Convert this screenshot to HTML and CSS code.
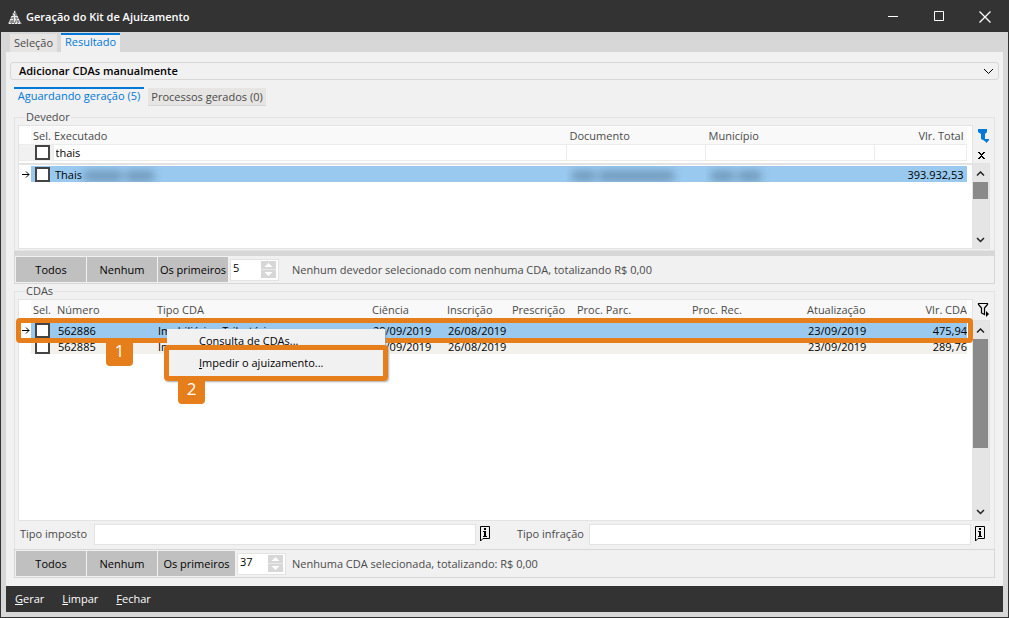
FILE: index.html
```html
<!DOCTYPE html>
<html lang="pt-BR">
<head>
<meta charset="utf-8">
<title>Geração do Kit de Ajuizamento</title>
<link rel="stylesheet" href="styles.css">
</head>
<body>
<div class="window">
  <header class="titlebar">
    <svg class="logo" width="14" height="15" viewBox="0 0 14 15"><path d="M7 0L9 5L12 11L14 14H0L2 10L5 4Z" fill="#8a8a8a"/><path d="M6.500 1v12M4 6.500h5M3 9.500h8M1 13.500h12M9 6l3 7M4 6l-3 7M5 3l4 10" fill="none" stroke="#efefef" stroke-width="1" stroke-dasharray="2 1"/></svg>
    <h1>Geração do Kit de Ajuizamento</h1>
    <div class="win-buttons">
      <button aria-label="Minimizar"><svg width="14" height="14"><path d="M2 6.500h10" stroke="#fff"/></svg></button>
      <button aria-label="Maximizar"><svg width="14" height="14"><path d="M2.500 1.500h9v9h-9z" stroke="#fff" fill="none"/></svg></button>
      <button aria-label="Fechar janela"><svg width="14" height="14"><path d="M1.500 1.500l11 11M12.500 1.500l-11 11" stroke="#fff" stroke-width="1.300"/></svg></button>
    </div>
  </header>

  <nav class="tabs main-tabs">
    <button class="tab">Seleção</button>
    <button class="tab active">Resultado</button>
  </nav>

  <main class="panel">
    <button class="accordion">Adicionar CDAs manualmente
      <svg width="11" height="7"><path d="M1 1l4.500 4.500L10 1" fill="none" stroke="#000"/></svg>
    </button>
    <div class="content">
      <nav class="tabs sub-tabs">
        <button class="tab active">Aguardando geração (5)</button>
        <button class="tab">Processos gerados (0)</button>
      </nav>

      <fieldset class="group debtors">
        <legend>Devedor</legend>
        <div class="grid">
          <div class="table-box">
            <table>
              <colgroup><col class="c-mark"><col class="c-check"><col><col class="c-doc"><col class="c-city"><col class="c-total"></colgroup>
              <thead>
                <tr class="head"><td></td><th class="sel">Sel.</th><th class="flush">Executado</th><th>Documento</th><th>Município</th><th class="num">Vlr. Total</th></tr>
                <tr class="filter"><td></td><td><input type="checkbox" aria-label="Filtrar selecionados"></td><td><input type="text" value="thais" aria-label="Filtrar executado"></td><td><input type="text" aria-label="Filtrar documento"></td><td><input type="text" aria-label="Filtrar município"></td><td><input type="text" aria-label="Filtrar valor"></td></tr>
              </thead>
              <tbody>
                <tr class="current"><td class="mark"><svg width="9" height="9"><path d="M0 4.500h7M4 1.500l3 3l-3 3" fill="none" stroke="#000"/></svg></td><td><input type="checkbox" aria-label="Selecionar Thais"></td><td class="flush">Thais<span class="masked"><i class="w3"></i><i class="w2"></i></span></td><td><span class="masked"><i class="w1"></i><i class="w4"></i></span></td><td><span class="masked"><i class="w1"></i><i class="w1"></i></span></td><td class="num">393.932,53</td></tr>
              </tbody>
            </table>
          </div>
          <div class="side">
            <div class="side-head">
              <button aria-label="Filtro"><svg width="13" height="15"><path d="M1 1h9v3L8 6v7L4 11V6L1 4z" fill="#0078d7"/><path d="M7 11h5v1l-2.500 3L7 12z" fill="#0078d7"/></svg></button>
              <button aria-label="Limpar filtro"><svg width="9" height="9"><path d="M1 1h2v1h1v1h1V2h1V1h2v1H7v1H6v1H5v1h1v1h1v1h1v1H6V7H5V6H4v1H3v1H1V7h1V6h1V5h1V4H3V3H2V2H1z"/></svg></button>
            </div>
            <div class="scroll"><span class="arrow"><svg width="9" height="6"><path d="M1 4.500L4.500 1L8 4.500" fill="none" stroke="#222" stroke-width="1.500"/></svg></span><span class="thumb"></span><span class="arrow end"><svg width="9" height="6"><path d="M1 1L4.500 4.500L8 1" fill="none" stroke="#222" stroke-width="1.500"/></svg></span></div>
          </div>
        </div>
      </fieldset>

      <div class="toolbar top">
        <div class="tools">
          <button>Todos</button><button>Nenhum</button><button>Os primeiros</button>
          <div class="spin"><input type="text" value="5" aria-label="Quantidade de devedores"><svg width="15" height="17"><path d="M0 0h15v17H0z" fill="#d7d7d7"/><path d="M7.500 2L11.500 6h-8zM7.500 15L11.500 11h-8z" fill="#fff"/><path d="M0 8.500h15" stroke="#e8e8e8"/></svg></div>
        </div>
        <span>Nenhum devedor selecionado com nenhuma CDA, totalizando R$ 0,00</span>
      </div>

      <fieldset class="group cdas">
        <legend>CDAs</legend>
        <div class="grid">
          <div class="table-box">
            <table>
              <colgroup><col class="c-mark"><col class="c-check2"><col class="c-number"><col><col class="c-date"><col class="c-short"><col class="c-short"><col class="c-proc"><col class="c-proc"><col class="c-update"><col class="c-value"></colgroup>
              <thead>
                <tr class="head"><td></td><th class="sel">Sel.</th><th>Número</th><th>Tipo CDA</th><th>Ciência</th><th>Inscrição</th><th>Prescrição</th><th>Proc. Parc.</th><th>Proc. Rec.</th><th>Atualização</th><th class="num">Vlr. CDA</th></tr>
              </thead>
              <tbody>
                <tr class="current"><td class="mark"><svg width="9" height="9"><path d="M0 4.500h7M4 1.500l3 3l-3 3" fill="none" stroke="#000"/></svg></td><td><input type="checkbox" aria-label="Selecionar 562886"></td><td>562886</td><td>Imobiliário - Tributário</td><td>28/09/2019</td><td>26/08/2019</td><td></td><td></td><td></td><td>23/09/2019</td><td class="num">475,94</td></tr>
                <tr class="odd"><td class="mark"></td><td><input type="checkbox" aria-label="Selecionar 562885"></td><td>562885</td><td>Im</td><td>28/09/2019</td><td>26/08/2019</td><td></td><td></td><td></td><td>23/09/2019</td><td class="num">289,76</td></tr>
              </tbody>
            </table>
          </div>
          <div class="side">
            <div class="side-head">
              <button aria-label="Filtro"><svg width="13" height="15"><path d="M1.500 1.500h9v1L7.500 6v6.500L4.500 11V6L1.500 2.500z" fill="none" stroke="#000" stroke-width="1.200"/><path d="M9 9l3 3l-3 3z"/></svg></button>
            </div>
            <div class="scroll"><span class="arrow"><svg width="9" height="6"><path d="M1 4.500L4.500 1L8 4.500" fill="none" stroke="#222" stroke-width="1.500"/></svg></span><span class="thumb"></span><span class="arrow end"><svg width="9" height="6"><path d="M1 1L4.500 4.500L8 1" fill="none" stroke="#222" stroke-width="1.500"/></svg></span></div>
          </div>
          <div class="callout row-callout"><span class="step">1</span></div>
          <div class="menu">
            <button>Consulta de CDAs...</button>
            <button><u>I</u>mpedir o ajuizamento...</button>
            <div class="callout menu-callout"><span class="step">2</span></div>
          </div>
        </div>
        <div class="fields">
          <label for="imposto">Tipo imposto</label><input id="imposto" type="text">
          <button aria-label="Informações do imposto"><svg width="12" height="17"><path d="M1.500 1.500h9v12H4L1.500 16z" fill="none" stroke="#000"/><path d="M5 3h2v2H5zM4 6h3v5h1v1H4v-1h1V7H4z"/></svg></button>
          <label class="second" for="infracao">Tipo infração</label><input id="infracao" type="text">
          <button aria-label="Informações da infração"><svg width="12" height="17"><path d="M1.500 1.500h9v12H4L1.500 16z" fill="none" stroke="#000"/><path d="M5 3h2v2H5zM4 6h3v5h1v1H4v-1h1V7H4z"/></svg></button>
        </div>
      </fieldset>

      <div class="toolbar">
        <div class="tools">
          <button>Todos</button><button>Nenhum</button><button class="wide">Os primeiros</button>
          <div class="spin"><input type="text" value="37" aria-label="Quantidade de CDAs"><svg width="15" height="17"><path d="M0 0h15v17H0z" fill="#d7d7d7"/><path d="M7.500 2L11.500 6h-8zM7.500 15L11.500 11h-8z" fill="#fff"/><path d="M0 8.500h15" stroke="#e8e8e8"/></svg></div>
        </div>
        <span>Nenhuma CDA selecionada, totalizando: R$ 0,00</span>
      </div>
    </div>
  </main>

  <footer class="actions">
    <button><u>G</u>erar</button><button><u>L</u>impar</button><button><u>F</u>echar</button>
  </footer>
</div>
</body>
</html>
```
FILE: styles.css
```css
* { box-sizing: border-box; }
body { margin: 0; font: 11px/14px "Open Sans", "Noto Sans", sans-serif; color: #4a4a4a; background: #333; }
button, input { font: inherit; color: inherit; border: 0; padding: 0; margin: 0; background: none; border-radius: 0; }
svg { display: block; flex: none; }

.window { height: 100vh; min-height: 500px; display: flex; flex-direction: column; border: 1px solid #333; border-top: 0; background: #d7d7d7; padding-bottom: 5px; }
.titlebar { height: 32px; flex: none; background: #333; color: #fff; display: flex; align-items: center; padding: 2px 16px 0 7px; gap: 4px; }
.titlebar h1 { font-size: 11px; line-height: 14px; font-weight: 600; margin: 0; flex: 1; }
.win-buttons { display: flex; gap: 32px; }

.tabs { display: flex; align-items: flex-start; flex: none; }
.tab { background: #e6e5e3; height: 18px; line-height: 18px; text-align: center; white-space: nowrap; }
.tab.active { color: #0078d7; border-top: 2px solid #0078d7; background: #f1f1f1; padding-bottom: 3px; line-height: 14px; }
.main-tabs { height: 20px; padding: 1px 9px 0; gap: 4px; }
.main-tabs .tab { width: 47px; margin-top: 1px; }
.main-tabs .tab.active { width: 59px; margin-top: 0; height: 19px; }
.sub-tabs { height: 23px; gap: 4px; }
.sub-tabs .tab { width: 118px; margin-top: 1px; border-bottom: 1px solid #d7d7d7; }
.sub-tabs .tab.active { width: 130px; margin-top: 0; border-bottom: 0; }

.panel { flex: 1; min-height: 0; margin: 0 5px; background: #f1f1f1; padding: 10px 4px 8px; display: flex; flex-direction: column; }
.accordion { height: 18px; flex: none; border: 1px solid #d7d7d7; border-radius: 3px; font-weight: 600; color: #000; display: flex; align-items: center; justify-content: space-between; padding: 0 4px 0 8px; }
.content { flex: 1; min-height: 0; display: flex; flex-direction: column; padding: 7px 4px 0; }

.group { margin: 0; min-width: 0; border: 1px solid #e3e3e3; padding: 1px 4px 0 3px; display: flex; flex-direction: column; }
.group legend { padding: 0 1px; margin-left: 7px; height: 14px; }
.debtors { height: 141px; flex: none; }
.cdas { flex: 1; min-height: 0; border-bottom: 0; }
.grid { display: flex; position: relative; flex: 1; min-height: 0; }
.debtors .grid { flex: none; height: 124px; }
.table-box { flex: 1; min-width: 0; background: #fff; border: 1px solid #e3e3e3; border-right: 0; padding-right: 5px; }
.debtors .table-box { padding-top: 1px; background: #fff linear-gradient(#e3e3e3, #e3e3e3) 0 37px / 100% 2px no-repeat; }
table { table-layout: fixed; border-collapse: collapse; width: 100%; }
td, th { padding: 0 3px; height: 16px; line-height: 15px; font-weight: 400; text-align: left; white-space: nowrap; overflow: hidden; vertical-align: middle; }
th { background: #f9f9f9; }
th.sel { padding: 0 0 0 2px; overflow: visible; }
th.flush { padding-left: 1px; }
td.flush { padding-left: 2px; }
.num { text-align: right; }
.head th { height: 17px; }
.filter td { padding: 0; height: 16px; border: solid #ececec; border-width: 1px 0; }
.filter td + td + td { border-left: 1px solid #ececec; border-right: 1px solid #ececec; }
.filter td:first-child, .filter td:nth-child(2) { background: #f1f1f1; }
.filter input[type="text"] { width: 100%; height: 14px; padding-left: 2px; color: #000; display: block; background: #fff; }
tbody::before { content: ""; display: table-row; height: 6px; }
tbody td { color: #000; }
.current td { background: #99c9ef; }
.odd td { background: #f2f1ec; }
tbody td.mark { background: #fff; padding: 0 0 0 3px; }
input[type="checkbox"] { appearance: none; width: 15px; height: 15px; border: 2px solid #444; background: #fff; display: block; margin: 0 0 0 1px; }
.filter input[type="checkbox"] { margin-left: 4px; }
.c-mark { width: 12px; }
.c-check { width: 22px; }
.c-doc { width: 139px; }
.c-city { width: 169px; }
.c-total { width: 92px; }
.c-check2 { width: 24px; }
.c-number { width: 100px; }
.c-date { width: 75px; }
.c-short { width: 65px; }
.c-proc { width: 115px; }
.c-update { width: 99px; }
.c-value { width: 63px; }
.cdas .head th { height: 19px; padding-left: 2px; }
.cdas tbody::before { height: 3px; }
.cdas th.num, .cdas td.num { padding-right: 0; }

.masked { display: inline-flex; gap: 4px; vertical-align: middle; margin-left: 2px; filter: blur(4px); }
.masked i { height: 10px; background: #6f97b9; }
.w1 { width: 23px; }
.w2 { width: 28px; }
.w3 { width: 38px; }
.w4 { width: 75px; }

.side { width: 18px; flex: none; display: flex; flex-direction: column; }
.side-head { height: 38px; flex: none; border-left: 1px solid #e3e3e3; background: #f1f1f1; padding: 3px 0 0 4px; display: flex; flex-direction: column; align-items: flex-start; gap: 8px; }
.scroll { flex: 1; background: #e5e5e5; border: 1px solid #fff; border-left: 0; outline: 1px solid #e3e3e3; outline-offset: -1px; padding-top: 1px; display: flex; flex-direction: column; }
.arrow { height: 17px; display: grid; place-items: center; }
.arrow.end { margin-top: auto; }
.thumb { background: #8a8a8a; height: 17px; margin-right: 1px; }
.cdas .side-head { height: 21px; }
.cdas .thumb { height: 109px; }

.toolbar { height: 29px; flex: none; border: 1px solid #d7d7d7; display: flex; align-items: center; padding-left: 1px; }
.toolbar.top { height: 33px; border-top-width: 5px; }
.tools { width: 276px; display: flex; gap: 1px; align-items: center; }
.tools button { width: 70px; height: 25px; background: #c0c0c0; color: #000; white-space: nowrap; }
.tools button.wide { width: 77px; }
.spin { width: 49px; height: 22px; margin-left: 1px; border: 1px solid #e3e3e3; background: #fff; display: flex; align-items: center; padding-right: 2px; }
.spin input { flex: 1; min-width: 0; padding: 0 0 3px 2px; color: #000; }

.fields { height: 28px; flex: none; display: flex; align-items: flex-start; padding: 3px 2px 0; line-height: 20px; }
.fields input { flex: 1; min-width: 0; height: 21px; background: #fff; border: 1px solid #e3e3e3; }
.fields label { width: 74px; }
.fields label.second { width: 72px; margin-left: 26px; }
.fields button { margin: 1px 0 0 3px; }
.fields button:last-child { margin-right: 2px; }

.callout { position: absolute; border: 5px solid #e67f1b; border-radius: 4px; pointer-events: none; }
.row-callout { left: -2px; right: 17px; top: 19px; height: 25px; }
.step { position: absolute; top: 100%; left: 85px; width: 27px; height: 28px; background: #e67f1b; color: #fff; border-radius: 4px; text-align: center; font-size: 17px; line-height: 26px; }
.menu { position: absolute; left: 149px; top: 30px; width: 218px; height: 50px; background: #f1f1f1; box-shadow: 1px 1px 2px #999; color: #000; display: flex; flex-direction: column; align-items: flex-start; padding: 3px 0 0 32px; }
.menu > button { height: 22px; padding-bottom: 4px; }
.menu-callout { left: -3px; right: -3px; top: 16px; height: 36px; box-shadow: 1px 1px 2px #aaa; }
.menu-callout .step { left: 9px; }

.actions { height: 26px; flex: none; margin: 0 5px; padding: 0 9px 1px; background: #333; color: #fff; display: flex; align-items: center; gap: 18px; }
```
